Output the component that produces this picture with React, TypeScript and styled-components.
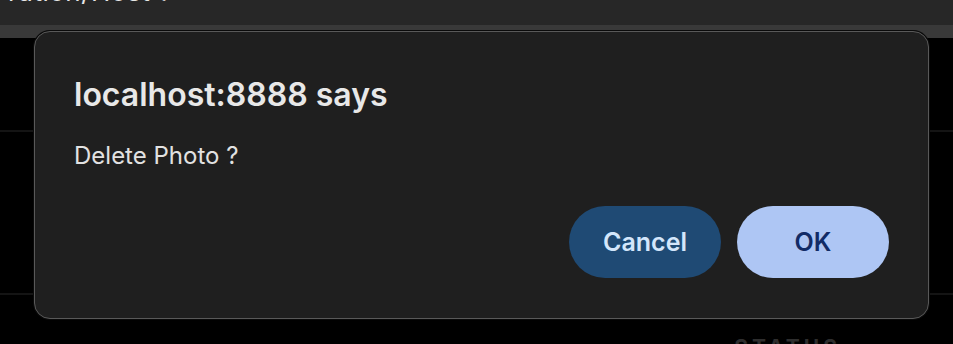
import React from "react";
import styled, { createGlobalStyle } from "styled-components";

const Global = createGlobalStyle`
  html, body { margin: 0; padding: 0; background: #000; }
  body { font-family: Inter, "Noto Sans", sans-serif; width: 953px; height: 344px; overflow: hidden; }
`;

const Page = styled.div`
  position: relative;
  width: 953px;
  height: 344px;
  background: #000;
  overflow: hidden;
  display: flex;
  flex-direction: column;
`;

const TopBar = styled.div`
  flex: 0 0 25px;
  background: #272727;
  overflow: hidden;
  display: flex;
  align-items: flex-end;
  padding-left: 8px;
`;

const TopTitle = styled.div`
  color: #e6e6e6;
  font-size: 26px;
  line-height: 26px;
  margin-bottom: 20px;
  letter-spacing: 0.5px;
`;

const Strip = styled.div`
  flex: 0 0 13px;
  background: #393939;
`;

const Row = styled.div<{ $h: number }>`
  flex: 0 0 ${(p) => p.$h}px;
  border-bottom: 2px solid #141414;
  box-sizing: border-box;
`;

const Bottom = styled.div`
  flex: 1 1 auto;
  min-height: 0;
  overflow: hidden;
  display: flex;
  justify-content: flex-end;
  padding-right: 112px;
  padding-top: 41px;
`;

const StatusLabel = styled.div`
  color: #2e2e2e;
  font-weight: 700;
  font-size: 21px;
  line-height: 24px;
  letter-spacing: 4px;
`;

const Dialog = styled.div`
  position: absolute;
  left: 34px;
  top: 31px;
  width: 895px;
  height: 288px;
  box-sizing: border-box;
  background: #1f1f1f;
  border: 1.5px solid #595959;
  border-radius: 16px;
  box-shadow: 0 0 0 1px #0a0a0a;
  padding: 43px 39px 0 39px;
  display: flex;
  flex-direction: column;
`;

const Title = styled.div`
  color: #e8e8e8;
  font-size: 32px;
  font-weight: 600;
  line-height: 40px;
`;

const Message = styled.div`
  color: #e2e2e2;
  font-size: 24px;
  line-height: 32px;
  margin-top: 25px;
`;

const Actions = styled.div`
  display: flex;
  justify-content: flex-end;
  gap: 16px;
  margin-top: 34px;
`;

const Button = styled.button<{ $primary?: boolean }>`
  width: 152px;
  height: 72px;
  border: none;
  border-radius: 36px;
  font-family: Inter, "Noto Sans", sans-serif;
  font-size: 25px;
  font-weight: 600;
  background: ${(p) => (p.$primary ? "#aec6f4" : "#1f4a74")};
  color: ${(p) => (p.$primary ? "#122b66" : "#d3e6fb")};
  cursor: pointer;
`;

export default function App() {
  return (
    <>
      <Global />
      <Page>
        <TopBar>
          <TopTitle>ration/Host ?</TopTitle>
        </TopBar>
        <Strip />
        <Row $h={94} />
        <Row $h={163} />
        <Bottom>
          <StatusLabel>STATUS</StatusLabel>
        </Bottom>
        <Dialog>
          <Title>localhost:8888 says</Title>
          <Message>Delete Photo ?</Message>
          <Actions>
            <Button>Cancel</Button>
            <Button $primary>OK</Button>
          </Actions>
        </Dialog>
      </Page>
    </>
  );
}
